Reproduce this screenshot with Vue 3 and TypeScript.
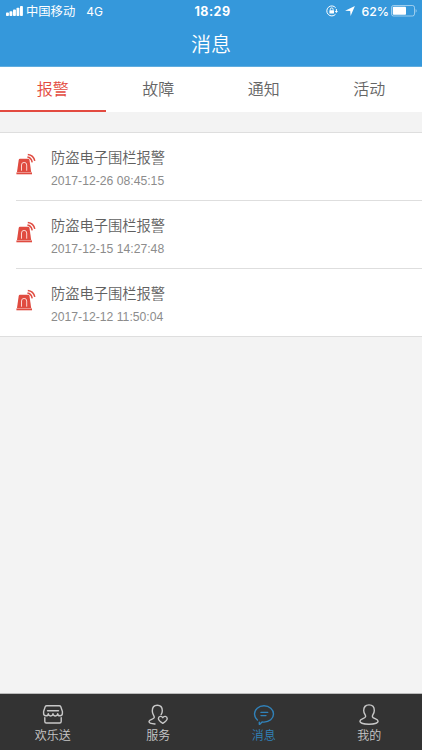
<script setup lang="ts">
import { ref } from 'vue'

interface Alarm {
  title: string
  time: string
}

const tabs: string[] = ['报警', '故障', '通知', '活动']
const activeTab = ref(0)

const alarms: Alarm[] = [
  { title: '防盗电子围栏报警', time: '2017-12-26 08:45:15' },
  { title: '防盗电子围栏报警', time: '2017-12-15 14:27:48' },
  { title: '防盗电子围栏报警', time: '2017-12-12 11:50:04' },
]

const navItems = [
  { key: 'shop', label: '欢乐送' },
  { key: 'service', label: '服务' },
  { key: 'message', label: '消息' },
  { key: 'mine', label: '我的' },
]
const activeNav = ref('message')
</script>

<template>
  <div class="screen">
    <header class="header">
      <div class="status">
        <div class="status-left">
          <svg class="signal" width="17" height="11" viewBox="0 0 17 11" fill="currentColor">
            <rect x="0" y="6.5" width="2.9" height="3.5" rx="0.8" />
            <rect x="3.5" y="5.2" width="2.9" height="4.8" rx="0.8" />
            <rect x="7" y="3.5" width="2.9" height="6.5" rx="0.8" />
            <rect x="10.5" y="1.8" width="2.9" height="8.2" rx="0.8" />
            <rect x="14" y="0" width="2.9" height="10" rx="0.8" />
          </svg>
          <span class="carrier">中国移动</span>
          <span class="network">4G</span>
        </div>
        <div class="clock">18:29</div>
        <div class="status-right">
          <svg class="lock" width="12" height="12" viewBox="0 0 12 12" fill="none" stroke="currentColor">
            <path d="M9.7 2.8A5 5 0 1 0 9.5 9.3M10.4 4v2.5" stroke-width="1" />
            <path d="M8.7 5.9H12l-1.6 2.1z" fill="currentColor" stroke="none" />
            <rect x="3.4" y="5.2" width="4.6" height="3.4" rx="0.4" fill="currentColor" stroke="none" />
            <path d="M4.3 5.4V4.3a1.4 1.4 0 0 1 2.8 0v1.1" stroke-width="0.9" />
          </svg>
          <svg class="arrow" width="10" height="10" viewBox="0 0 10 10" fill="currentColor">
            <path d="M9.9.1 5.6 9.9 5.2 4.9 .1 4.7z" />
          </svg>
          <span class="percent">62%</span>
          <svg class="battery" width="26" height="12" viewBox="0 0 26 12">
            <rect x="0.5" y="0.5" width="23" height="10.5" rx="2" fill="none" stroke="#fff" stroke-opacity=".5" />
            <rect x="1.8" y="1.8" width="13.2" height="7.9" rx="0.8" fill="#fff" />
            <path d="M24.6 4c1.400.7 1.400 3 0 3.700z" fill="#fff" fill-opacity=".5" />
          </svg>
        </div>
      </div>
      <h1 class="title">消息</h1>
    </header>

    <nav class="tabs">
      <button
        v-for="(tab, i) in tabs"
        :key="tab"
        class="tab"
        :class="{ active: i === activeTab }"
        @click="activeTab = i"
      >{{ tab }}</button>
    </nav>

    <main class="content">
      <ul class="list">
        <li v-for="alarm in alarms" :key="alarm.time" class="row">
          <svg class="siren" width="20" height="22" viewBox="0 0 20 22" fill="none">
            <path d="M2.700 6.900Q2.900 5.800 4 5.800h8.200Q13.300 5.800 13.500 6.900L15.200 18.900H1z" fill="#e04b40" />
            <path d="M.4 19.400h15.600v1.900H.4z" fill="#e04b40" />
            <path d="M5.500 17.700V12a2.600 2.600 0 0 1 5.200 0v5.700" stroke="#fbd5d1" stroke-width="1" />
            <path d="M11.400 4.100Q15.300 4.600 16.200 9.400M11.800 1.400Q17.500 2 18.800 7.800" stroke="#e04b40" stroke-width="1.500" />
          </svg>
          <div class="text">
            <div class="name">{{ alarm.title }}</div>
            <div class="time">{{ alarm.time }}</div>
          </div>
        </li>
      </ul>
    </main>

    <footer class="navbar">
      <button
        v-for="item in navItems"
        :key="item.key"
        class="nav-item"
        :class="{ active: item.key === activeNav }"
        @click="activeNav = item.key"
      >
        <svg class="nav-icon" width="22" height="22" viewBox="0 0 22 22" fill="none" stroke="currentColor" stroke-width="1.4" stroke-linecap="round" stroke-linejoin="round">
          <template v-if="item.key === 'shop'">
            <path d="M4.700 1.800h12.600q1 0 1.500 1l1.600 4.700v1.800a2.300 2.300 0 0 1-4.700.3 2.300 2.300 0 0 1-4.700 0 2.300 2.300 0 0 1-4.700 0 2.300 2.300 0 0 1-4.700-.3V7.500l1.600-4.700q.5-1 1.500-1z" />
            <path d="M5.500 6.800h11" />
            <path d="M2.800 13.800v3.700q0 1.500 1.500 1.500h13.400q1.500 0 1.500-1.500v-3.700" />
          </template>
          <template v-else-if="item.key === 'service'">
            <path d="M8 20c-3-.1-6-.9-6-2.400 0-2.500 5-2 5.300-4.200.2-1.400-2-3-2-6.500C5.300 3.300 7.400 1.300 10.300 1.300s5 2 5 5.400c0 1.800-.7 3-1.200 3.900" />
            <path d="M15.800 19.400c-2.300-1.500-4.400-2.900-4.400-4.900 0-2.400 3.300-2.900 4.400-.8 1.100-2.100 4.400-1.600 4.400.8 0 2-2.100 3.400-4.400 4.900z" />
          </template>
          <template v-else-if="item.key === 'message'">
            <path d="M4.400 16A8.200 8.200 0 0 1 1.500 10C1.500 5.400 5.700 1.800 11 1.800s9.500 3.600 9.500 8.200-4.200 8.100-9.500 8.100q-1 0-1.900-.2l-2.300 2.400q-.6.3-.5-.6v-1.500" />
            <path d="M8 8.400h6.700M8 11.600h5" />
          </template>
          <template v-else>
            <path d="M11 .9c3.300 0 5.300 2.200 5.300 5.500 0 3.200-2.300 4.800-1.900 6.300.5 2 5.700 2.100 5.700 4.600 0 1.800-4.500 2.900-9.100 2.900s-9.100-1.100-9.100-2.900c0-2.500 5.200-2.600 5.700-4.600C8 11.200 5.700 9.600 5.700 6.400 5.700 3.100 7.700.9 11 .9z" />
          </template>
        </svg>
        <span class="nav-label">{{ item.label }}</span>
      </button>
    </footer>
  </div>
</template>

<style>
body {
  margin: 0;
}
</style>

<style scoped>
.screen {
  display: flex;
  flex-direction: column;
  height: 100vh;
  background: #f3f3f3;
  font-family: 'Liberation Sans', 'Noto Sans CJK SC', sans-serif;
}
button {
  margin: 0;
  padding: 0;
  border: 0;
  background: none;
  font-family: inherit;
}
.header {
  flex: none;
  height: 67px;
  box-sizing: border-box;
  border-bottom: 1px solid #60addf;
  background: #3598db;
  color: #fff;
}
.status {
  display: grid;
  grid-template-columns: 1fr auto 1fr;
  align-items: center;
  height: 22px;
  padding: 0 6px;
}
.status-left,
.status-right {
  display: flex;
  align-items: center;
}
.carrier {
  margin-left: 3px;
  padding-top: 1px;
  font-size: 12.3px;
  line-height: 20px;
}
.network {
  margin-left: 11px;
  font-family: Inter, sans-serif;
  font-size: 12px;
}
.clock {
  padding-left: 3px;
  font-family: Inter, sans-serif;
  font-size: 12.5px;
  font-weight: 700;
  letter-spacing: 0.5px;
}
.status-right {
  justify-content: flex-end;
}
.arrow {
  margin-left: 7px;
}
.percent {
  margin-left: 6px;
  font-family: Inter, sans-serif;
  font-size: 12.3px;
  font-weight: 500;
}
.battery {
  margin-left: 2px;
  margin-right: -1px;
}
.title {
  margin: 0;
  padding-top: 1px;
  text-align: center;
  font-size: 20px;
  font-weight: 350;
  line-height: 44px;
}
.tabs {
  display: flex;
  flex: none;
  height: 45px;
  background: #fff;
}
.tab {
  flex: 1;
  padding-top: 2px;
  border-bottom: 2px solid transparent;
  color: #666;
  font-size: 16px;
  font-weight: 350;
  line-height: 41px;
}
.tab.active {
  border-bottom-color: #e34a40;
  color: #e34a40;
}
.content {
  flex: 1;
  padding-top: 20px;
}
.list {
  margin: 0;
  padding: 0 0 0 16px;
  border: solid #dedede;
  border-width: 1px 0;
  background: #fff;
  list-style: none;
}
.row {
  display: flex;
  height: 68px;
  box-sizing: border-box;
  border-bottom: 1px solid #dedede;
}
.row:last-child {
  height: 67px;
  border-bottom: 0;
}
.siren {
  margin-top: 20px;
}
.text {
  margin-left: 15px;
  padding-top: 14px;
}
.name {
  color: #606060;
  font-size: 14.25px;
  font-weight: 350;
  line-height: 22px;
}
.time {
  margin-top: 4px;
  color: #8c8c8c;
  font-size: 12.2px;
  line-height: 16px;
}
.navbar {
  display: flex;
  flex: none;
  height: 57px;
  box-sizing: border-box;
  border-top: 1px solid #bbb;
  background: #333;
}
.nav-item {
  display: flex;
  flex: 1;
  flex-direction: column;
  align-items: center;
  padding-top: 10px;
  color: #c8c8c8;
}
.nav-item.active {
  color: #3182ba;
}
.nav-label {
  margin-top: 1px;
  font-size: 12px;
  font-weight: 350;
  line-height: 18px;
}
</style>
